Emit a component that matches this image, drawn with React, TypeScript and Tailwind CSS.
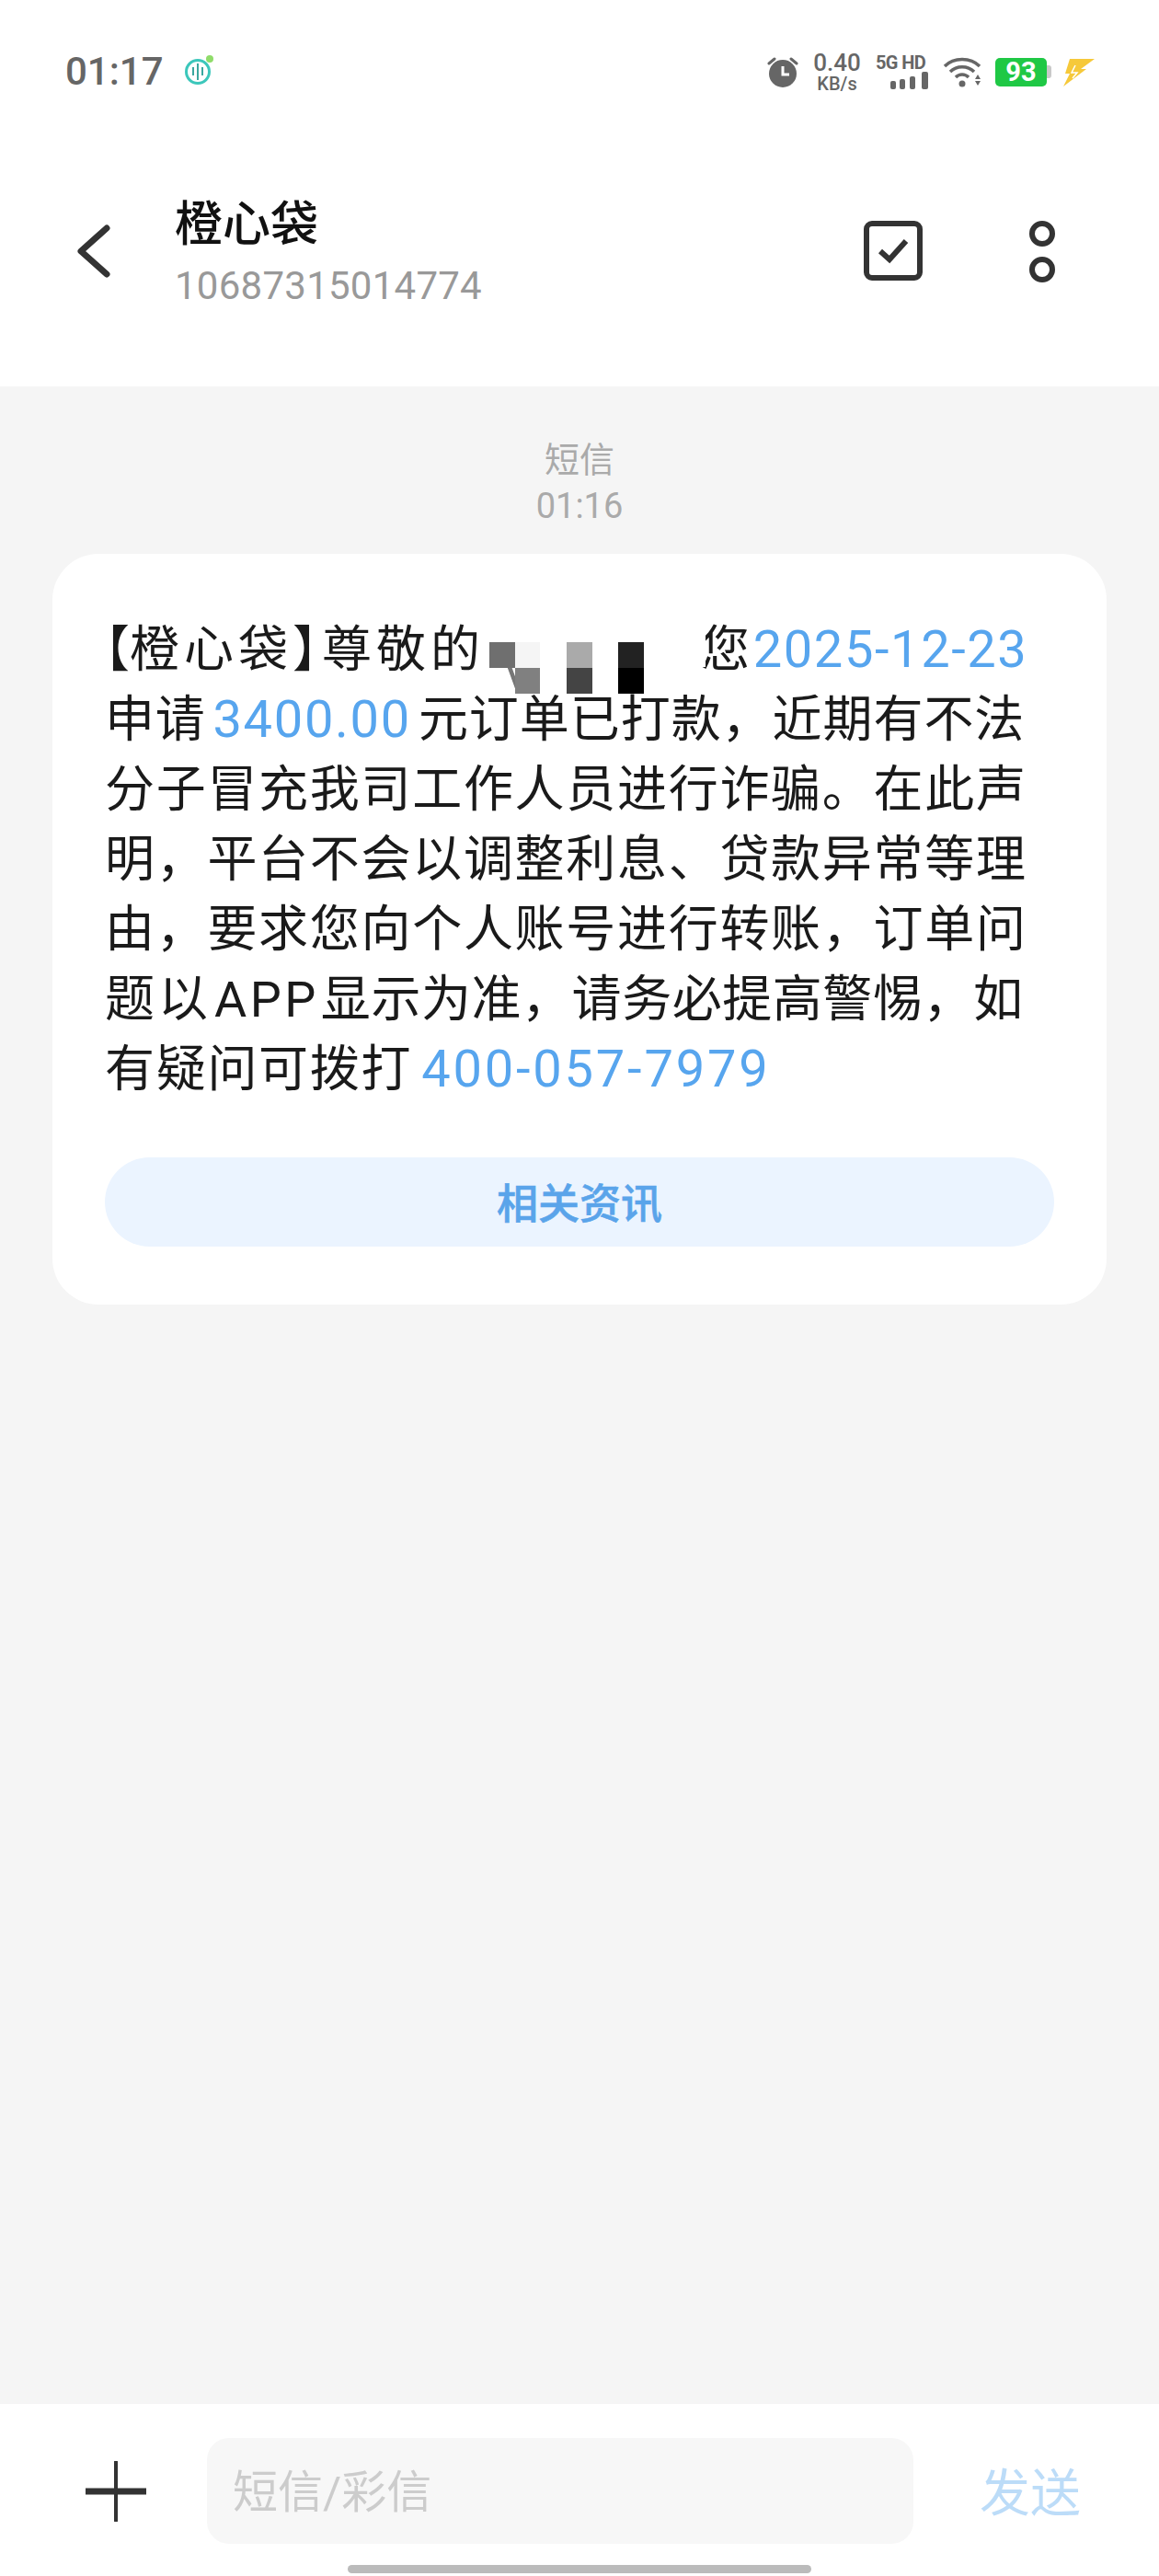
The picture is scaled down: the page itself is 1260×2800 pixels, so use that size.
const sans = 'font-["Roboto","Noto_Sans_CJK_SC",sans-serif]';

function AlarmIcon() {
  return (
    <svg width="34" height="34" viewBox="0 0 34 34" className="shrink-0">
      <circle cx="17" cy="19" r="15" fill="#666" />
      <path d="M17 11v9h7" fill="none" stroke="#fff" strokeWidth="3" />
      <path d="M2 8l6-5M32 8l-6-5" stroke="#666" strokeWidth="3" strokeLinecap="round" />
    </svg>
  );
}

function SignalBars() {
  return (
    <svg width="42" height="20" viewBox="0 0 42 20" className="self-end">
      <rect x="0" y="10" width="6" height="9" rx="2" fill="#666" />
      <rect x="10" y="8" width="6" height="11" rx="2" fill="#666" />
      <rect x="21" y="5" width="6" height="14" rx="2" fill="#666" />
      <rect x="34" y="0" width="7" height="19" rx="2" fill="#666" />
    </svg>
  );
}

function WifiIcon() {
  return (
    <svg width="42" height="34" viewBox="0 0 42 34" className="shrink-0">
      <path d="M2 11C12 1 30 1 40 11" fill="none" stroke="#666" strokeWidth="3.5" />
      <path d="M8 17C15 10 27 10 34 17" fill="none" stroke="#666" strokeWidth="3.5" />
      <path d="M14 23C18 19 24 19 28 23" fill="none" stroke="#666" strokeWidth="3.5" />
      <circle cx="21" cy="30" r="3.5" fill="#666" />
      <path d="M38 20l3 5h-6zM38 32l3-5h-6z" fill="#666" />
    </svg>
  );
}

function BoltIcon() {
  return (
    <svg width="35" height="31" viewBox="0 0 35 31" className="shrink-0">
      <path d="M8 1H35L20 12h6L1 31l7-14H3z" fill="#f6c93a" />
      <path d="M14 8l-4 8h6l-5 6" fill="none" stroke="#fff" strokeWidth="1.5" />
    </svg>
  );
}

function StatusBar() {
  return (
    <div className={`mt-[40px] h-[76px] flex items-center justify-between pl-[71px] pr-[70px] ${sans}`}>
      <div className="flex items-center">
        <span className="text-[42px] leading-none font-medium text-[#666]">01:17</span>
        <svg width="36" height="36" viewBox="0 0 36 36" className="ml-[20px] -mt-[4px]">
          <circle cx="17" cy="20" r="12.5" fill="none" stroke="#3cc7bb" strokeWidth="3" />
          <path d="M17 11v18M12 15v9M22 15v9" stroke="#3aa79f" strokeWidth="2" fill="none" />
          <circle cx="30" cy="6" r="4" fill="#8fdc6a" />
        </svg>
      </div>
      <div className="flex items-center">
        <AlarmIcon />
        <div className="ml-[14px] w-[56px] flex flex-col items-center text-[#666]">
          <span className="text-[26px] leading-[26px] font-medium">0.40</span>
          <span className="text-[20px] leading-[20px] font-medium">KB/s</span>
        </div>
        <div className="ml-[14px] w-[58px] flex flex-col text-[#666]">
          <span className="text-[20px] leading-[20px] font-bold whitespace-nowrap tracking-[-0.6px]">5G HD</span>
          <SignalBars />
        </div>
        <div className="ml-[15px]">
          <WifiIcon />
        </div>
        <div className="ml-[15px] flex items-center">
          <div className="w-[56px] h-[31px] rounded-[5px] bg-[#1fc845] text-white text-[29px] leading-[31px] font-bold text-center">
            93
          </div>
          <div className="w-[5px] h-[14px] rounded-r-[3px] bg-[#c9c9c9]" />
        </div>
        <div className="ml-[12px]">
          <BoltIcon />
        </div>
      </div>
    </div>
  );
}

function NavBar() {
  return (
    <div className={`mt-[97px] h-[120px] flex items-center ${sans}`}>
      <svg width="44" height="58" viewBox="0 0 44 58" className="ml-[80px] shrink-0">
        <path d="M36 4L8 29l28 25" fill="none" stroke="#333" strokeWidth="7" strokeLinecap="round" strokeLinejoin="round" />
      </svg>
      <div className="ml-[66px] flex-1 self-start mt-[1px]">
        <div className="text-[52px] leading-[62px] font-medium text-[#111]">橙心袋</div>
        <div className="text-[42px] leading-[58px] tracking-[0.25px] text-[#999] mt-[6px]">10687315014774</div>
      </div>
      <svg width="66" height="66" viewBox="0 0 66 66" className="shrink-0 ml-[2px]">
        <rect x="4" y="3" width="58" height="59" rx="6" fill="none" stroke="#333" strokeWidth="6" />
        <path d="M19 33l10 9 18-20" fill="none" stroke="#333" strokeWidth="6" />
      </svg>
      <svg width="32" height="70" viewBox="0 0 32 70" className="ml-[113px] mr-[111px] shrink-0">
        <circle cx="16" cy="16" r="11" fill="none" stroke="#333" strokeWidth="6" />
        <circle cx="16" cy="55" r="11" fill="none" stroke="#333" strokeWidth="6" />
      </svg>
    </div>
  );
}

// Pixelated cover over the recipient's name, with the stray edges it leaves behind
function NameMosaic() {
  return (
    <span className="relative inline-block w-[234px] h-[40px] align-baseline">
      <span className="absolute left-[5px] top-[13px] w-[28px] h-[28px] bg-[#6f6f6f]" />
      <span className="absolute left-[33px] top-[13px] w-[27px] h-[28px] bg-[#f5f5f5]" />
      <span className="absolute left-[33px] top-[41px] w-[27px] h-[28px] bg-[#808080]" />
      <span className="absolute left-[24px] top-[41px] w-[9px] h-[28px] bg-[linear-gradient(70deg,transparent_55%,#777_60%,#777_80%,transparent_85%)]" />
      <span className="absolute left-[89px] top-[13px] w-[28px] h-[28px] bg-[#aaaaaa]" />
      <span className="absolute left-[89px] top-[41px] w-[28px] h-[28px] bg-[#444444]" />
      <span className="absolute left-[145px] top-[13px] w-[28px] h-[28px] bg-[#222222]" />
      <span className="absolute left-[145px] top-[41px] w-[28px] h-[28px] bg-black" />
      <span className="absolute left-[231px] top-[-24px] w-[9px] h-[64px] bg-white" />
    </span>
  );
}

function MessageCard() {
  const link = "text-[56px] leading-none text-[#57a5ee]";
  return (
    <div className="mt-[29px] mx-[57px] rounded-[50px] bg-white pt-[67px] pb-[63px] px-[57px]">
      <p className="text-[54px] leading-[76px] tracking-[1.7px] text-[#1a1a1a] whitespace-nowrap">
        <span className="tracking-[5px]">
          <span className="tracking-[0px] [font-feature-settings:'halt']">【</span>橙心袋<span className="[font-feature-settings:'halt']">】</span>尊敬的
        </span>
        <NameMosaic />您<span className={`${link} tracking-[1.6px] ml-[2px]`}>2025-12-23</span>
        <br />
        <span className="tracking-[0.7px]">申请</span>
        <span className={`${link} tracking-[1.7px] ml-[8px] mr-[8px]`}>3400.00</span>
        <span className="tracking-[0.95px]">元订单已打款，近期有不法</span>
        <br />
        分子冒充我司工作人员进行诈骗。在此声
        <br />
        明，平台不会以调整利息、贷款异常等理
        <br />
        由，要求您向个人账号进行转账，订单问
        <br />
        <span className="tracking-[0.55px]">
          <span className="tracking-[4px]">题以</span>
          <span className="tracking-[3.5px] ml-[3px] mr-[2px]">APP</span>显示为准，请务必提高警惕，如
        </span>
        <br />
        有疑问可拨打<span className={`${link} tracking-[2.8px] ml-[10px]`}>400-057-7979</span>
      </p>
      <div className="mt-[57px] h-[97px] rounded-full bg-[#ebf4ff] flex items-center justify-center text-[45px] font-medium text-[#5aa4ea]">
        <span className="mt-[7px] [-webkit-text-stroke:0.6px_#5aa4ea]">相关资讯</span>
      </div>
    </div>
  );
}

function Composer() {
  return (
    <div className="relative h-[187px] bg-white flex items-start pt-[37px]">
      <svg width="66" height="66" viewBox="0 0 66 66" className="ml-[93px] mt-[25px] shrink-0">
        <path d="M33 1v64" stroke="#333" strokeWidth="4" strokeLinecap="round" />
        <path d="M1 33h64" stroke="#333" strokeWidth="7" strokeLinecap="round" />
      </svg>
      <div className="ml-[66px] w-[768px] h-[115px] rounded-[24px] bg-[#f7f7f7] flex items-center pl-[28px] text-[49px] text-[#cccccc]">
        <span className="mt-[4px]">短信/彩信</span>
      </div>
      <div className="ml-[72px] mt-[25px] text-[55px] leading-[70px] text-[#bcdcf8]">发送</div>
      <div className="absolute left-[378px] top-[175px] w-[504px] h-[9px] rounded-full bg-[#bbbbbb]" />
    </div>
  );
}

export default function App() {
  return (
    <div className={`w-[1260px] h-[2800px] flex flex-col bg-[#f5f5f5] ${sans}`}>
      <header className="h-[420px] shrink-0 bg-white overflow-hidden">
        <StatusBar />
        <NavBar />
      </header>
      <main className="flex-1 pt-[55px]">
        <div className="text-center text-[38px] leading-[50px] text-[#aaaaaa]">短信</div>
        <div className="text-center text-[38px] leading-[50px] text-[#aaaaaa]">01:16</div>
        <div className="-mt-[2px]">
          <MessageCard />
        </div>
      </main>
      <Composer />
    </div>
  );
}
